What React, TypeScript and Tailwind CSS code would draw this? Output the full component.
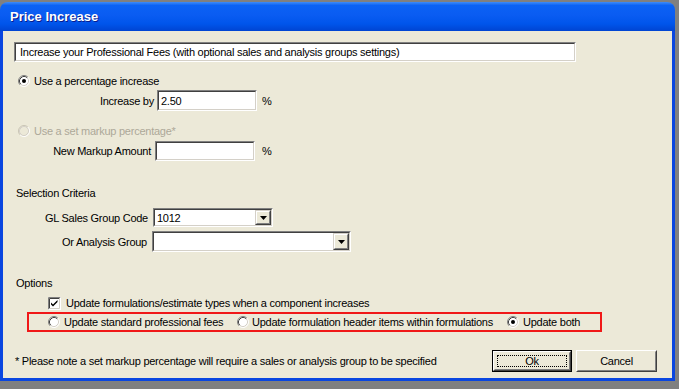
import React from "react";

const font = "font-['Liberation_Sans',Arial,sans-serif]";

function Radio({ checked, disabled }: { checked?: boolean; disabled?: boolean }) {
  return (
    <svg width="12" height="12" viewBox="0 0 12 12" className="shrink-0">
      <circle cx="6" cy="6" r="5" fill={disabled ? "#ece9d8" : "#ffffff"} />
      <path d="M2.11 9.89 A5.5 5.5 0 0 1 9.89 2.11" fill="none" stroke={disabled ? "#c8c4b4" : "#808080"} />
      <path d="M9.89 2.11 A5.5 5.5 0 0 1 2.11 9.89" fill="none" stroke="#ffffff" />
      <path d="M2.82 9.18 A4.5 4.5 0 0 1 9.18 2.82" fill="none" stroke={disabled ? "#d4d0c8" : "#404040"} />
      <path d="M9.18 2.82 A4.5 4.5 0 0 1 2.82 9.18" fill="none" stroke="#d4d0c8" />
      {checked && <circle cx="6" cy="6" r="2" fill="#000000" />}
    </svg>
  );
}

function Checkbox({ checked }: { checked?: boolean }) {
  return (
    <svg width="13" height="13" viewBox="0 0 13 13" className="shrink-0">
      <rect x="0" y="0" width="13" height="13" fill="#ffffff" />
      <path d="M0.5 12.5 V0.5 H12.5" fill="none" stroke="#808080" />
      <path d="M12.5 0.5 V12.5 H0.5" fill="none" stroke="#ffffff" />
      <path d="M1.5 11.5 V1.5 H11.5" fill="none" stroke="#404040" />
      <path d="M11.5 1.5 V11.5 H1.5" fill="none" stroke="#d4d0c8" />
      {checked && <path d="M3 5.5 L5 7.5 L9.5 3 V5 L5 9.5 L3 7.5 Z" fill="#000000" />}
    </svg>
  );
}

function Sunken({ className, children }: { className: string; children?: React.ReactNode }) {
  return (
    <div className={`shrink-0 border border-t-[#808080] border-l-[#808080] border-b-white border-r-white ${className}`}>
      <div className="h-full bg-white border border-t-[#404040] border-l-[#404040] border-b-[#d4d0c8] border-r-[#d4d0c8] flex items-center">
        {children}
      </div>
    </div>
  );
}

function Dropdown({ className, value }: { className: string; value?: string }) {
  return (
    <Sunken className={className}>
      <span className="flex-1 pl-[2px] text-black">{value}</span>
      <div className="h-full w-[16px] border border-t-[#d4d0c8] border-l-[#d4d0c8] border-b-[#404040] border-r-[#404040]">
        <div className="h-full bg-[#ece9d8] border border-t-white border-l-white border-b-[#808080] border-r-[#808080] flex items-center justify-center">
          <svg width="7" height="4" viewBox="0 0 7 4">
            <path d="M0 0 H7 L3.5 4 Z" fill="#000000" />
          </svg>
        </div>
      </div>
    </Sunken>
  );
}

function Button({ label, isDefault, className }: { label: string; isDefault?: boolean; className: string }) {
  const body = (
    <div className="h-full border border-t-white border-l-white border-b-[#404040] border-r-[#404040]">
      <div className="h-full bg-[#ece9d8] border border-t-[#ece9d8] border-l-[#ece9d8] border-b-[#808080] border-r-[#808080] flex items-center justify-center p-[2px]">
        {isDefault ? (
          <div className="w-full h-full border border-dotted border-black flex items-center justify-center">{label}</div>
        ) : (
          label
        )}
      </div>
    </div>
  );
  return isDefault ? (
    <div className={`shrink-0 border border-black ${className}`}>{body}</div>
  ) : (
    <div className={`shrink-0 ${className}`}>{body}</div>
  );
}

export default function App() {
  return (
    <div className={`w-[679px] h-[389px] bg-[#808080] pt-[2px] overflow-hidden text-[11px] leading-[14px] tracking-[-0.25px] text-black ${font}`}>
      <div className="w-[675px] h-[379px] flex flex-col">
        {/* title bar */}
        <div className="h-[29px] shrink-0 rounded-t-[8px] bg-[linear-gradient(to_bottom,#3e8cf8_0%,#0b62f4_12%,#0a5cf2_45%,#0055eb_75%,#0044d2_100%)] flex items-center pl-[10px]">
          <span className="text-white font-bold text-[13px] tracking-normal [text-shadow:1px_1px_0_#0a1c8c]">
            Price Increase
          </span>
        </div>

        {/* body */}
        <div className="flex-1 flex flex-col bg-[#ece9d8] border-x-[3px] border-b-[3px] border-[#0a46e0]">
          <Sunken className="ml-[11px] mt-[11px] w-[562px] h-[20px]">
            <span className="pl-[4px]">
              Increase your Professional Fees (with optional sales and analysis groups settings)
            </span>
          </Sunken>

          <div className="mt-[12px] ml-[15px] h-[14px] flex items-center gap-[4px]">
            <Radio checked />
            <span>Use a percentage increase</span>
          </div>

          <div className="mt-[2px] flex items-center">
            <span className="w-[151px] text-right">Increase by</span>
            <Sunken className="ml-[3px] w-[100px] h-[21px]">
              <span className="pl-[2px]">2.50</span>
            </Sunken>
            <span className="ml-[5px]">%</span>
          </div>

          <div className="mt-[13px] ml-[15px] h-[14px] flex items-center gap-[4px]">
            <Radio disabled />
            <span className="text-[#aca899]">Use a set markup percentage*</span>
          </div>

          <div className="mt-[3px] flex items-center">
            <span className="w-[148px] text-right">New Markup Amount</span>
            <Sunken className="ml-[4px] w-[100px] h-[20px]" />
            <span className="ml-[7px]">%</span>
          </div>

          <div className="mt-[25px] ml-[13px] h-[14px]">Selection Criteria</div>

          <div className="mt-[8px] flex items-center">
            <span className="w-[145px] text-right">GL Sales Group Code</span>
            <Dropdown className="ml-[5px] w-[120px] h-[19px]" value="1012" />
          </div>

          <div className="mt-[4px] flex items-center">
            <span className="w-[144px] text-right">Or Analysis Group</span>
            <Dropdown className="ml-[5px] w-[199px] h-[21px]" />
          </div>

          <div className="mt-[24px] ml-[13px] h-[14px]">Options</div>

          <div className="mt-[6px] ml-[45px] h-[14px] flex items-center gap-[5px]">
            <Checkbox checked />
            <span>Update formulations/estimate types when a component increases</span>
          </div>

          <div className="mt-[2px] ml-[24px] w-[575px] h-[20px] border-2 border-[#f01818] flex items-center pl-[19px]">
            <div className="w-[189px] flex items-center gap-[4px]">
              <Radio />
              <span className="whitespace-nowrap">Update standard professional fees</span>
            </div>
            <div className="w-[270px] flex items-center gap-[3px]">
              <Radio />
              <span className="whitespace-nowrap">Update formulation header items within formulations</span>
            </div>
            <div className="flex items-center gap-[4px]">
              <Radio checked />
              <span className="whitespace-nowrap">Update both</span>
            </div>
          </div>

          <div className="mt-[18px] flex items-center">
            <span className="ml-[12px] flex-1 whitespace-nowrap">
              * Please note a set markup percentage will require a sales or analysis group to be specified
            </span>
            <Button label="Ok" isDefault className="w-[80px] h-[22px]" />
            <Button label="Cancel" className="ml-[4px] mr-[15px] w-[81px] h-[22px]" />
          </div>
        </div>
      </div>
    </div>
  );
}
